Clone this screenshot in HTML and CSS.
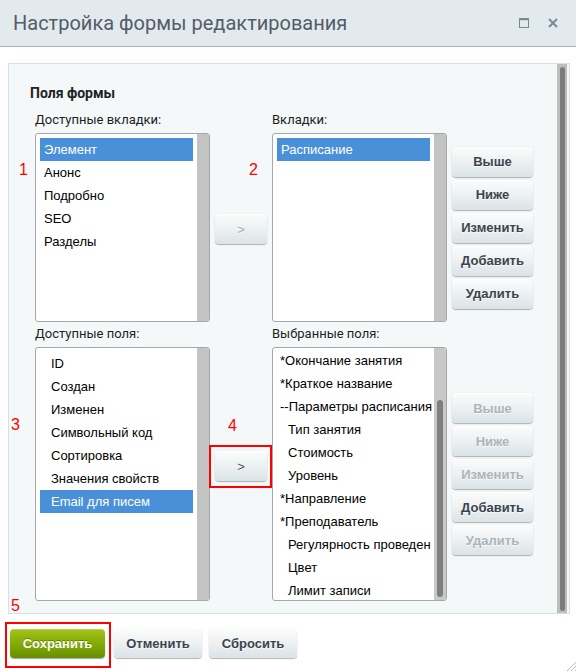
FILE: index.html
```html
<!DOCTYPE html>
<html lang="ru">
<head>
<meta charset="utf-8">
<title>Настройка формы редактирования</title>
<link rel="stylesheet" href="styles.css">
</head>
<body>
<div class="dialog">
  <header class="head">
    <h1 class="title">Настройка формы редактирования</h1>
    <div class="head-icons">
      <svg class="ico" width="10" height="10" viewBox="0 0 10 10"><rect x="0.5" y="0.5" width="9" height="9" fill="none" stroke="#7c8896" stroke-width="1"/><rect x="0" y="0" width="10" height="2.2" fill="#7c8896"/></svg>
      <svg class="ico" width="10" height="10" viewBox="0 0 10 10"><path d="M1 1L9 9M9 1L1 9" stroke="#7c8896" stroke-width="2" fill="none"/></svg>
    </div>
  </header>

  <main class="panel">
    <div class="panel-body">
      <h2 class="section">Поля формы</h2>
      <div class="grid">
        <div class="label">Доступные вкладки:</div>
        <div></div>
        <div class="label">Вкладки:</div>
        <div></div>

        <div class="list">
          <div class="items">
            <div class="opt sel">Элемент</div>
            <div class="opt">Анонс</div>
            <div class="opt">Подробно</div>
            <div class="opt">SEO</div>
            <div class="opt">Разделы</div>
          </div>
          <div class="track"></div>
        </div>
        <div class="mid mid-top"><button class="btn btn-move" disabled>&gt;</button></div>
        <div class="list">
          <div class="items">
            <div class="opt sel">Расписание</div>
          </div>
          <div class="track"></div>
        </div>
        <div class="side">
          <button class="btn">Выше</button>
          <button class="btn">Ниже</button>
          <button class="btn">Изменить</button>
          <button class="btn">Добавить</button>
          <button class="btn">Удалить</button>
        </div>

        <div class="label label-2">Доступные поля:</div>
        <div></div>
        <div class="label label-2">Выбранные поля:</div>
        <div></div>

        <div class="list">
          <div class="items items-fields">
            <div class="opt">ID</div>
            <div class="opt">Создан</div>
            <div class="opt">Изменен</div>
            <div class="opt">Символьный код</div>
            <div class="opt">Сортировка</div>
            <div class="opt">Значения свойств</div>
            <div class="opt sel">Email для писем</div>
          </div>
          <div class="track"></div>
        </div>
        <div class="mid mid-bottom">
          <div class="mark-frame"><button class="btn btn-move">&gt;</button></div>
        </div>
        <div class="list">
          <div class="items items-chosen">
            <div class="opt">*Окончание занятия</div>
            <div class="opt">*Краткое название</div>
            <div class="opt">--Параметры расписания</div>
            <div class="opt sub">Тип занятия</div>
            <div class="opt sub">Стоимость</div>
            <div class="opt sub">Уровень</div>
            <div class="opt">*Направление</div>
            <div class="opt">*Преподаватель</div>
            <div class="opt sub">Регулярность проведен</div>
            <div class="opt sub">Цвет</div>
            <div class="opt sub">Лимит записи</div>
          </div>
          <div class="track track-scroll"><div class="thumb"></div></div>
        </div>
        <div class="side">
          <button class="btn" disabled>Выше</button>
          <button class="btn" disabled>Ниже</button>
          <button class="btn" disabled>Изменить</button>
          <button class="btn">Добавить</button>
          <button class="btn" disabled>Удалить</button>
        </div>
      </div>
    </div>
    <div class="vscroll"><div class="vthumb"></div></div>
  </main>

  <footer class="foot">
    <div class="mark-box"><button class="btn btn-save">Сохранить</button></div>
    <button class="btn btn-foot btn-cancel">Отменить</button>
    <button class="btn btn-foot btn-reset">Сбросить</button>
    <svg class="grip" width="10" height="10" viewBox="0 0 10 10"><path d="M10 1L1 10M10 5L5 10M10 9L9 10" stroke="#b4b9bc" stroke-width="1" fill="none"/></svg>
  </footer>

  <span class="mark m1">1</span>
  <span class="mark m2">2</span>
  <span class="mark m3">3</span>
  <span class="mark m4">4</span>
  <span class="mark m5">5</span>
</div>
</body>
</html>
```

FILE: styles.css
```css
* { box-sizing: border-box; }

html, body {
  margin: 0;
  padding: 0;
  background: #ffffff;
}

.dialog {
  position: relative;
  width: 576px;
  height: 671px;
  overflow: hidden;
  background: #ffffff;
  font-family: "Liberation Sans", Arial, sans-serif;
}

/* header */
.head {
  display: flex;
  align-items: center;
  height: 47px;
  padding: 0 18px 1px 13px;
  background: #e3eaed;
  border-bottom: 1px solid #a9afb3;
}

.title {
  margin: 0;
  font-family: Roboto, "Liberation Sans", sans-serif;
  font-weight: 400;
  font-size: 20px;
  line-height: 24px;
  color: #535c69;
}

.head-icons {
  margin-left: auto;
  display: flex;
  align-items: center;
  gap: 19px;
}

.ico { display: block; }

/* panel */
.panel {
  display: flex;
  height: 551px;
  margin: 16px 6px 0 8px;
  background: #f5f8f9;
  border: 1px solid #d5e0e6;
}

.panel-body {
  flex: 1;
  padding: 20px 0 0 21px;
}

.section {
  margin: 0 0 10px;
  font-family: Roboto, "Liberation Sans", sans-serif;
  font-weight: 700;
  font-size: 14px;
  line-height: 18px;
  color: #222;
}

.grid {
  margin-left: 5px;
  display: grid;
  grid-template-columns: 175px 52px 175px 81px;
  grid-template-rows: auto 189px auto 254px;
  column-gap: 5px;
}

.label {
  font-family: Roboto, "Liberation Sans", sans-serif;
  font-size: 13px;
  line-height: 16px;
  color: #1e1e1e;
  margin-bottom: 5px;
  white-space: nowrap;
}

.label-2 { margin-top: 4px; }

/* list boxes */
.list {
  display: flex;
  background: #ffffff;
  border: 1px solid #a5a8aa;
  border-radius: 3px;
  overflow: hidden;
}

.items {
  flex: 1;
  min-width: 0;
  padding: 4px;
  overflow: hidden;
}

.opt {
  height: 23px;
  line-height: 23px;
  padding-left: 4px;
  font-size: 13px;
  color: #000;
  white-space: nowrap;
}

.opt.sel {
  background: #4a90d9;
  color: #ffffff;
}

.items-fields .opt { padding-left: 11px; }

.items-chosen {
  padding: 1px 0 0 4px;
}
.items-chosen .opt { padding-left: 3px; }
.items-chosen .opt.sub { padding-left: 11px; }

.track {
  width: 12px;
  flex: none;
  background: #c2c3c2;
}

.track-scroll {
  display: flex;
  flex-direction: column;
  padding: 52px 3px 3px 3px;
  background: #c8c8c8;
}

.thumb {
  flex: 1;
  background: #7f7f7f;
  border-radius: 3px;
}

/* middle move buttons */
.mid {
  display: flex;
  align-self: center;
}
.mid-top { margin-top: 3px; }
.mid-bottom { margin-bottom: 16px; }

/* red annotation frame around the move button */
.mark-frame {
  flex: none;
  border: 2px solid #ff0000;
  padding: 4px 3px 5px 4px;
  margin: -6px -5px -7px -6px;
}

/* side buttons */
.side {
  align-self: center;
  display: flex;
  flex-direction: column;
  gap: 3px;
}

/* buttons */
.btn {
  display: block;
  height: 30px;
  width: 81px;
  padding: 0;
  border: none;
  border-radius: 4px;
  background: linear-gradient(to bottom, #fbfcfc 0%, #eef2f3 45%, #dbe3e6 100%);
  box-shadow: 0 1px 1px rgba(0, 0, 0, 0.28), 0 0 1px rgba(0, 0, 0, 0.2), inset 0 1px 0 #ffffff;
  font-family: "Liberation Sans", Arial, sans-serif;
  font-weight: 700;
  font-size: 13px;
  color: #3b454d;
  text-shadow: 0 1px rgba(255, 255, 255, 0.7);
  text-align: center;
  cursor: pointer;
}

.btn:disabled {
  color: #adb5ba;
  cursor: default;
}

.btn-move {
  width: 52px;
  font-weight: 400;
  font-size: 13px;
  color: #4b545b;
}
.btn-move:disabled { color: #a4acb1; }

/* big scrollbar */
.vscroll {
  width: 10px;
  flex: none;
  margin-right: 2px;
  padding: 3px 2px 2px 3px;
  display: flex;
  background: #bdbdbd;
}

.vthumb {
  flex: 1;
  background: #7c7c7c;
  border-radius: 3px;
}

/* footer */
.foot {
  display: flex;
  align-items: flex-start;
  height: 57px;
  padding: 8px 0 0 5px;
}

.mark-box {
  border: 2px solid #ff0000;
  padding: 5px 4px 8px 3px;
}

.btn-save {
  width: 95px;
  height: 29px;
  color: #ffffff;
  background: linear-gradient(to bottom, #a4c31a 0%, #86ab05 50%, #658f00 100%);
  box-shadow: 0 1px 1px rgba(0, 0, 0, 0.35), inset 0 1px 0 rgba(255, 255, 255, 0.25);
  text-shadow: 0 -1px rgba(0, 0, 0, 0.3);
}

.btn-foot {
  width: 88px;
  height: 29px;
  margin-top: 7px;
}
.btn-cancel { margin-left: 3px; }
.btn-reset { margin-left: 7px; }

.grip {
  margin-left: auto;
  align-self: flex-end;
  display: block;
}

/* red annotation numbers */
.mark {
  position: absolute;
  font-family: "Liberation Sans", Arial, sans-serif;
  font-size: 16px;
  line-height: 18px;
  color: #ff0000;
}
.m1 { left: 19px; top: 161px; }
.m2 { left: 249px; top: 161px; }
.m3 { left: 11px; top: 416px; }
.m4 { left: 228px; top: 417px; }
.m5 { left: 11px; top: 597px; }
```
